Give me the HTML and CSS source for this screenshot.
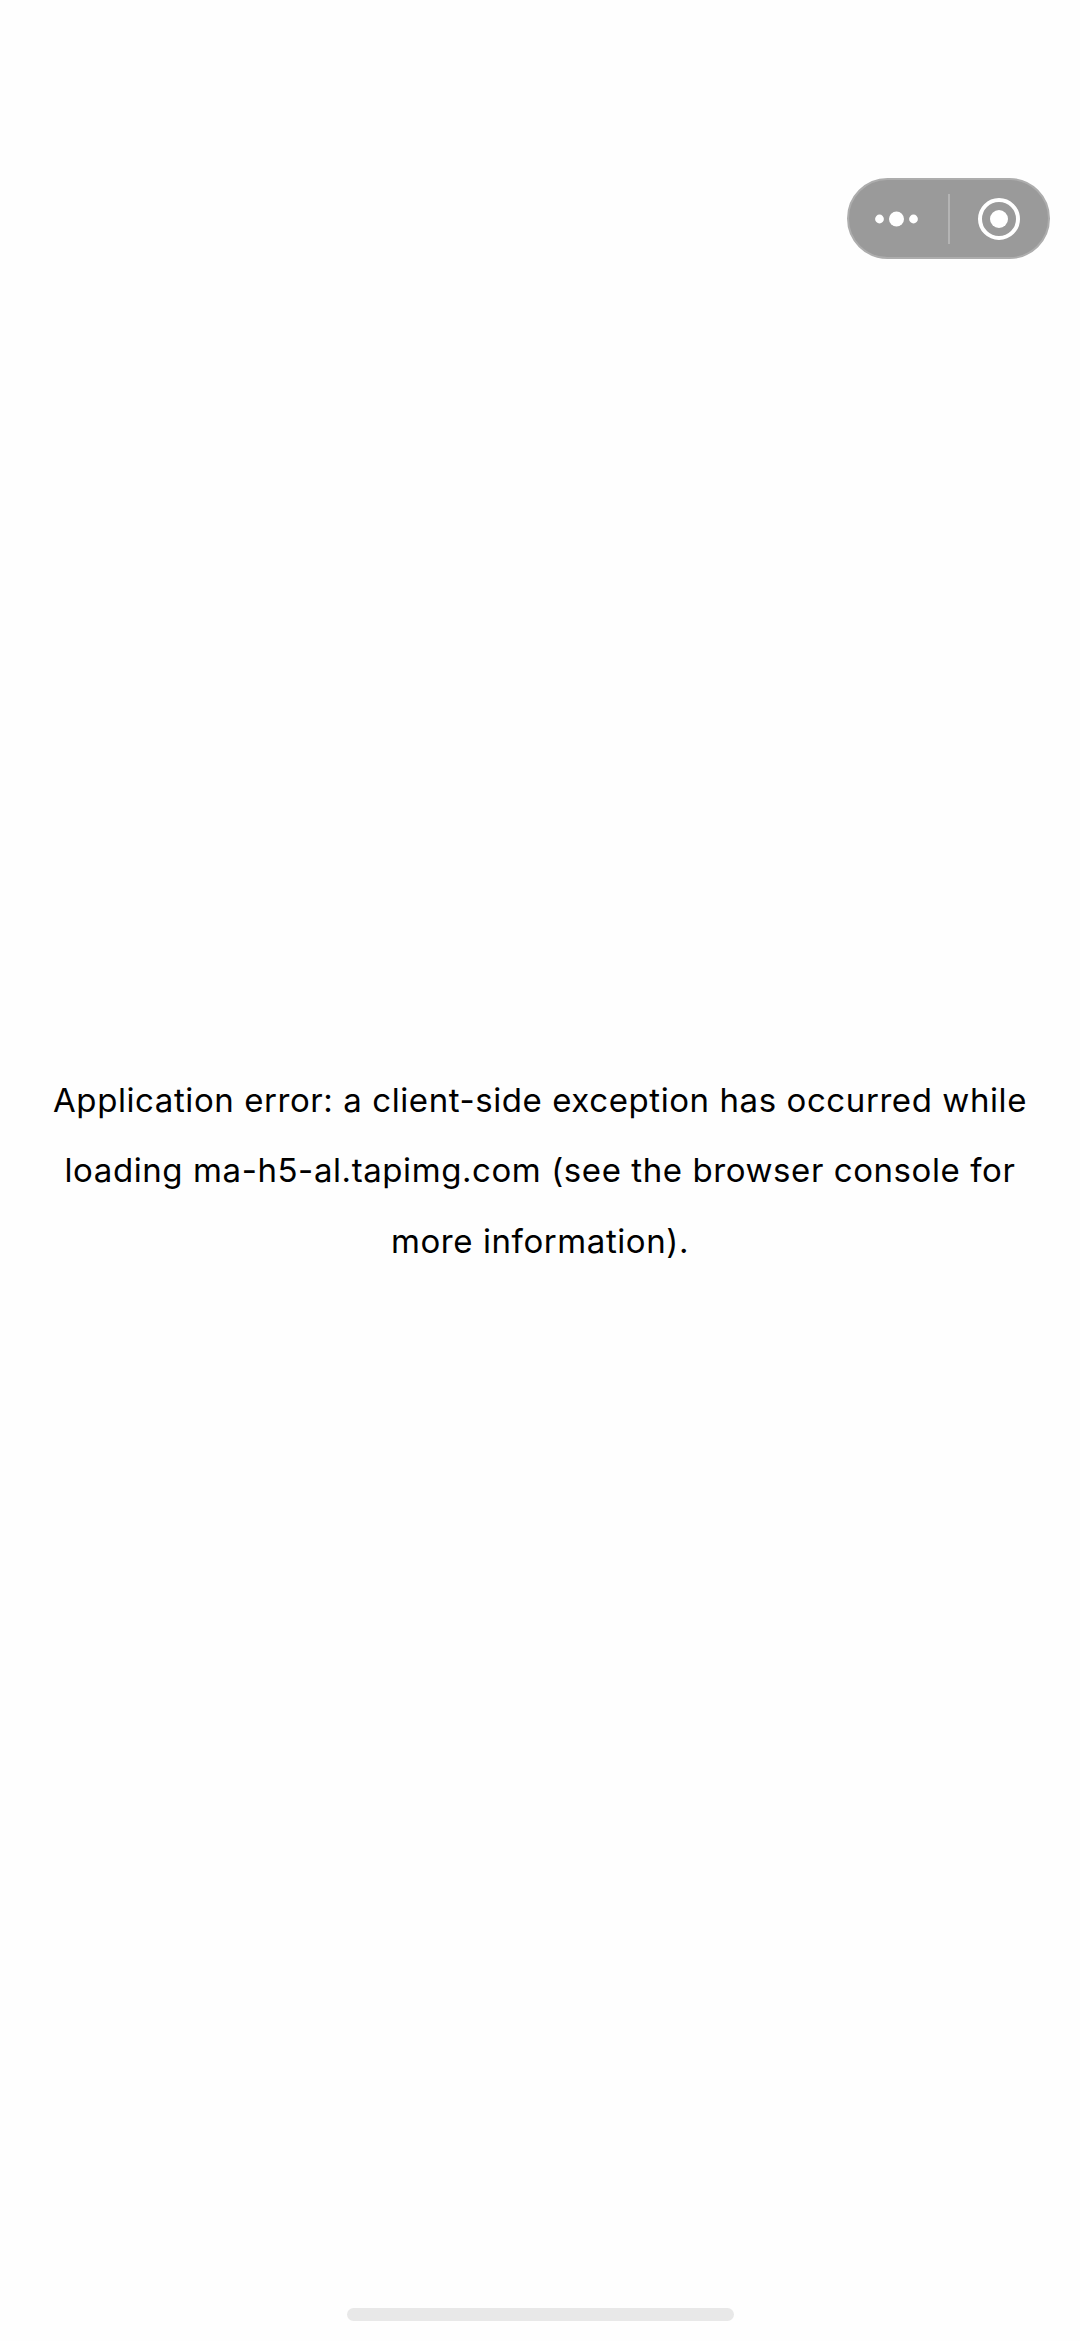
FILE: index.html
```html
<!DOCTYPE html>
<html>
<head>
	<meta charset="utf-8">
	<title>Application error</title>
	<link rel="stylesheet" href="styles.css">
</head>
<body>
	<div class="capsule">
		<div class="capsule_btn">
			<svg width="60" height="24" viewBox="0 0 60 24">
				<circle cx="11.5" cy="12" r="4.4" fill="#fff"/>
				<circle cx="28.5" cy="12" r="7.5" fill="#fff"/>
				<circle cx="45.5" cy="12" r="4.4" fill="#fff"/>
			</svg>
		</div>
		<div class="capsule_line"></div>
		<div class="capsule_btn">
			<svg width="44" height="44" viewBox="0 0 44 44">
				<circle cx="22" cy="22" r="19" fill="none" stroke="#fff" stroke-width="4"/>
				<circle cx="22" cy="22" r="9" fill="#fff"/>
			</svg>
		</div>
	</div>
	<main class="page">
		<p class="message">Application error: a client-side exception has occurred while loading ma-h5-al.tapimg.com (see the browser console for more information).</p>
	</main>
	<div class="home_bar"></div>
</body>
</html>
```

FILE: styles.css
```css
html, body {
	margin: 0;
	height: 100%;
}

body {
	background-color: #fefefe;
	font-family: Inter, "Liberation Sans", sans-serif;
	color: #000;
	overflow: hidden;
}

.page {
	height: 100%;
	display: flex;
	align-items: center;
	justify-content: center;
	padding: 0 40px;
	box-sizing: border-box;
}

.message {
	margin: 0;
	font-size: 33px;
	letter-spacing: 0.58px;
	line-height: 70.5px;
	text-align: center;
}

.capsule {
	position: absolute;
	top: 178px;
	left: 847px;
	width: 203px;
	height: 81px;
	box-sizing: border-box;
	display: flex;
	align-items: center;
	background-color: #9a9a9a;
	border: 2px solid #adadad;
	border-radius: 41px;
}

.capsule_btn {
	flex: 1;
	display: flex;
	align-items: center;
	justify-content: center;
}

.capsule_line {
	width: 2px;
	height: 50px;
	background-color: #b4b4b4;
}

.home_bar {
	position: absolute;
	top: 2308px;
	left: 347px;
	width: 387px;
	height: 13px;
	background-color: #e8e8e8;
	border-radius: 7px;
}
```
